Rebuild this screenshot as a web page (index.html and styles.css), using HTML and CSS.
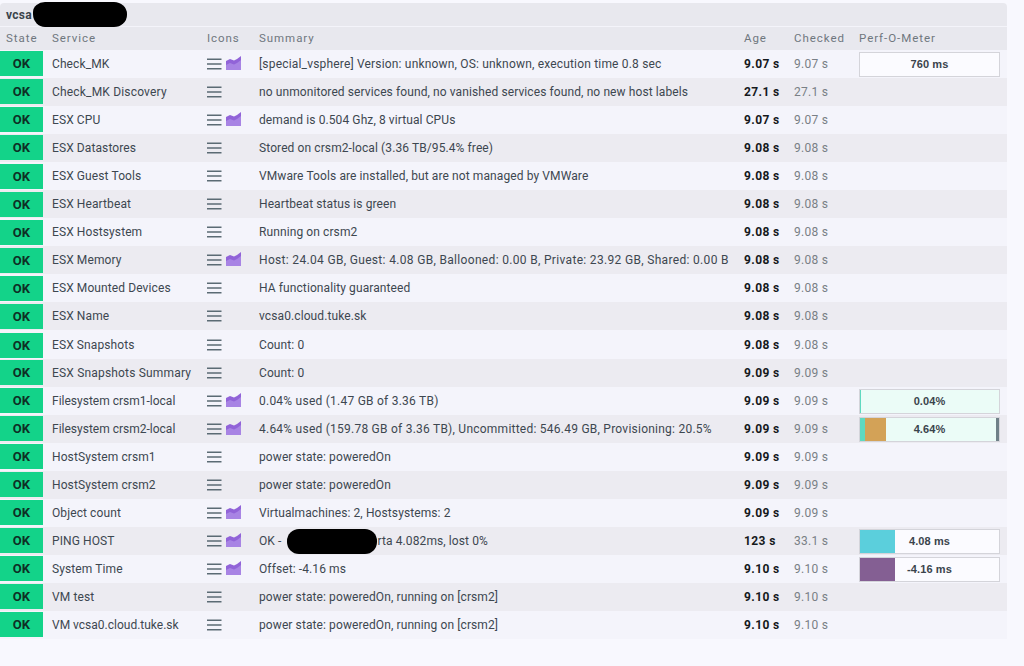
FILE: index.html
```html
<!DOCTYPE html>
<html lang="en">
<head>
<meta charset="utf-8">
<title>vcsa services</title>
<link rel="stylesheet" href="styles.css">
</head>
<body>
<svg class="defs" width="0" height="0" aria-hidden="true">
  <symbol id="menu" viewBox="0 0 15 12"><path d="M0 1.2h14.5M0 6h14.5M0 10.8h14.5" stroke="#5b6b74" stroke-width="1.6" fill="none"/></symbol>
  <symbol id="graph" viewBox="0 0 15 14"><path d="M0 14V5l4-2 4 1.5L11 3l4-3v14z" fill="#9163d8"/><path d="M0 14V9l4-2 4 1.5L11 7l4-3v10z" fill="#a884e4"/></symbol>
</svg>
<main class="view">
  <div class="title">vcsa<span class="blob-title"></span></div>
  <table class="services">
    <colgroup><col class="c-state"><col class="c-service"><col class="c-icons"><col class="c-summary"><col class="c-age"><col class="c-checked"><col class="c-perf"></colgroup>
    <thead><tr><th>State</th><th>Service</th><th>Icons</th><th>Summary</th><th>Age</th><th>Checked</th><th>Perf-O-Meter</th></tr></thead>
    <tbody>
      <tr><td class="state"><div class="badge">OK</div></td><td>Check_MK</td><td class="icons"><svg class="i-menu"><use href="#menu"/></svg><svg class="i-graph"><use href="#graph"/></svg></td><td class="wide">[special_vsphere] Version: unknown, OS: unknown, execution time 0.8 sec</td><td class="age">9.07 s</td><td class="checked">9.07 s</td><td class="perf"><div class="meter"><div class="bar-text">760 ms</div></div></td></tr>
      <tr><td class="state"><div class="badge">OK</div></td><td class="wide">Check_MK Discovery</td><td class="icons"><svg class="i-menu"><use href="#menu"/></svg></td><td>no unmonitored services found, no vanished services found, no new host labels</td><td class="age">27.1 s</td><td class="checked">27.1 s</td><td class="perf"></td></tr>
      <tr><td class="state"><div class="badge">OK</div></td><td>ESX CPU</td><td class="icons"><svg class="i-menu"><use href="#menu"/></svg><svg class="i-graph"><use href="#graph"/></svg></td><td>demand is 0.504 Ghz, 8 virtual CPUs</td><td class="age">9.07 s</td><td class="checked">9.07 s</td><td class="perf"></td></tr>
      <tr><td class="state"><div class="badge">OK</div></td><td>ESX Datastores</td><td class="icons"><svg class="i-menu"><use href="#menu"/></svg></td><td>Stored on crsm2-local (3.36 TB/95.4% free)</td><td class="age">9.08 s</td><td class="checked">9.08 s</td><td class="perf"></td></tr>
      <tr><td class="state"><div class="badge">OK</div></td><td>ESX Guest Tools</td><td class="icons"><svg class="i-menu"><use href="#menu"/></svg></td><td>VMware Tools are installed, but are not managed by VMWare</td><td class="age">9.08 s</td><td class="checked">9.08 s</td><td class="perf"></td></tr>
      <tr><td class="state"><div class="badge">OK</div></td><td>ESX Heartbeat</td><td class="icons"><svg class="i-menu"><use href="#menu"/></svg></td><td>Heartbeat status is green</td><td class="age">9.08 s</td><td class="checked">9.08 s</td><td class="perf"></td></tr>
      <tr><td class="state"><div class="badge">OK</div></td><td>ESX Hostsystem</td><td class="icons"><svg class="i-menu"><use href="#menu"/></svg></td><td>Running on crsm2</td><td class="age">9.08 s</td><td class="checked">9.08 s</td><td class="perf"></td></tr>
      <tr><td class="state"><div class="badge">OK</div></td><td>ESX Memory</td><td class="icons"><svg class="i-menu"><use href="#menu"/></svg><svg class="i-graph"><use href="#graph"/></svg></td><td class="dense">Host: 24.04 GB, Guest: 4.08 GB, Ballooned: 0.00 B, Private: 23.92 GB, Shared: 0.00 B</td><td class="age">9.08 s</td><td class="checked">9.08 s</td><td class="perf"></td></tr>
      <tr><td class="state"><div class="badge">OK</div></td><td>ESX Mounted Devices</td><td class="icons"><svg class="i-menu"><use href="#menu"/></svg></td><td>HA functionality guaranteed</td><td class="age">9.08 s</td><td class="checked">9.08 s</td><td class="perf"></td></tr>
      <tr><td class="state"><div class="badge">OK</div></td><td>ESX Name</td><td class="icons"><svg class="i-menu"><use href="#menu"/></svg></td><td>vcsa0.cloud.tuke.sk</td><td class="age">9.08 s</td><td class="checked">9.08 s</td><td class="perf"></td></tr>
      <tr><td class="state"><div class="badge">OK</div></td><td>ESX Snapshots</td><td class="icons"><svg class="i-menu"><use href="#menu"/></svg></td><td>Count: 0</td><td class="age">9.08 s</td><td class="checked">9.08 s</td><td class="perf"></td></tr>
      <tr><td class="state"><div class="badge">OK</div></td><td class="wide">ESX Snapshots Summary</td><td class="icons"><svg class="i-menu"><use href="#menu"/></svg></td><td>Count: 0</td><td class="age">9.09 s</td><td class="checked">9.09 s</td><td class="perf"></td></tr>
      <tr><td class="state"><div class="badge">OK</div></td><td class="snug">Filesystem crsm1-local</td><td class="icons"><svg class="i-menu"><use href="#menu"/></svg><svg class="i-graph"><use href="#graph"/></svg></td><td class="numeric">0.04% used (1.47 GB of 3.36 TB)</td><td class="age">9.09 s</td><td class="checked">9.09 s</td><td class="perf"><div class="meter meter-fs"><div class="seg seg-teal seg-thin"></div><div class="bar-text">0.04%</div></div></td></tr>
      <tr><td class="state"><div class="badge">OK</div></td><td class="snug">Filesystem crsm2-local</td><td class="icons"><svg class="i-menu"><use href="#menu"/></svg><svg class="i-graph"><use href="#graph"/></svg></td><td class="numeric">4.64% used (159.78 GB of 3.36 TB), Uncommitted: 546.49 GB, Provisioning: 20.5%</td><td class="age">9.09 s</td><td class="checked">9.09 s</td><td class="perf"><div class="meter meter-fs"><div class="seg seg-teal seg-small"></div><div class="seg seg-gold"></div><div class="seg-gap"></div><div class="bar-text">4.64%</div><div class="seg seg-slate"></div></div></td></tr>
      <tr><td class="state"><div class="badge">OK</div></td><td>HostSystem crsm1</td><td class="icons"><svg class="i-menu"><use href="#menu"/></svg></td><td>power state: poweredOn</td><td class="age">9.09 s</td><td class="checked">9.09 s</td><td class="perf"></td></tr>
      <tr><td class="state"><div class="badge">OK</div></td><td>HostSystem crsm2</td><td class="icons"><svg class="i-menu"><use href="#menu"/></svg></td><td>power state: poweredOn</td><td class="age">9.09 s</td><td class="checked">9.09 s</td><td class="perf"></td></tr>
      <tr><td class="state"><div class="badge">OK</div></td><td>Object count</td><td class="icons"><svg class="i-menu"><use href="#menu"/></svg><svg class="i-graph"><use href="#graph"/></svg></td><td>Virtualmachines: 2, Hostsystems: 2</td><td class="age">9.09 s</td><td class="checked">9.09 s</td><td class="perf"></td></tr>
      <tr><td class="state"><div class="badge">OK</div></td><td>PING HOST</td><td class="icons"><svg class="i-menu"><use href="#menu"/></svg><svg class="i-graph"><use href="#graph"/></svg></td><td>OK - <span class="blob-inline"></span>rta 4.082ms, lost 0%</td><td class="age">123 s</td><td class="checked">33.1 s</td><td class="perf"><div class="meter"><div class="seg seg-half seg-cyan"></div><div class="bar-text">4.08 ms</div></div></td></tr>
      <tr><td class="state"><div class="badge">OK</div></td><td>System Time</td><td class="icons"><svg class="i-menu"><use href="#menu"/></svg><svg class="i-graph"><use href="#graph"/></svg></td><td>Offset: -4.16 ms</td><td class="age">9.10 s</td><td class="checked">9.10 s</td><td class="perf"><div class="meter"><div class="seg seg-half seg-purple"></div><div class="bar-text">-4.16 ms</div></div></td></tr>
      <tr><td class="state"><div class="badge">OK</div></td><td>VM test</td><td class="icons"><svg class="i-menu"><use href="#menu"/></svg></td><td>power state: poweredOn, running on [crsm2]</td><td class="age">9.10 s</td><td class="checked">9.10 s</td><td class="perf"></td></tr>
      <tr><td class="state"><div class="badge">OK</div></td><td class="snug">VM vcsa0.cloud.tuke.sk</td><td class="icons"><svg class="i-menu"><use href="#menu"/></svg></td><td>power state: poweredOn, running on [crsm2]</td><td class="age">9.10 s</td><td class="checked">9.10 s</td><td class="perf"></td></tr>
    </tbody>
  </table>
</main>
</body>
</html>
```
FILE: styles.css
```css
* { box-sizing: border-box; }
html, body { margin: 0; padding: 0; }
body {
  background: #f8f8fe;
  color: #3d4750;
  font-family: Roboto, "Liberation Sans", sans-serif;
  font-size: 12px;
  letter-spacing: .1px;
  height: 666px;
  overflow: hidden;
}
.defs { position: absolute; }
.view { width: 1007px; padding-top: 3px; }
.title {
  position: relative;
  height: 24px;
  line-height: 24px;
  padding-left: 6px;
  font-weight: 700;
  font-size: 12px;
  letter-spacing: .3px;
  background: #e8e8ee;
  border-bottom: 1px solid #f4f4fa;
  border-radius: 4px 4px 0 0;
  color: #3a444c;
}
.blob-title {
  position: absolute;
  left: 33px;
  top: -1px;
  width: 94px;
  height: 25px;
  background: #000;
  border-radius: 12px 13px 13px 12px / 10px 12px 12px 13px;
}
.blob-inline {
  display: inline-block;
  vertical-align: middle;
  width: 90px;
  height: 25px;
  margin: -6px 1px -6px 2px;
  background: #000;
  border-radius: 12px;
}
.services { width: 100%; border-collapse: collapse; table-layout: fixed; }
.c-state { width: 43px; }
.c-service { width: 155px; }
.c-icons { width: 52px; }
.c-summary { width: 485px; }
.c-age { width: 50px; }
.c-checked { width: 65px; }
th {
  height: 23px;
  padding: 0 0 2px 9px;
  text-align: left;
  font-weight: 400;
  color: #6f777e;
  letter-spacing: .95px;
  background: #e8e8ee;
  font-size: 11.5px;
}
th:first-child { padding-left: 6px; }
tbody tr { height: 28px; background: #f4f4fb; }
tbody tr:nth-child(even) { background: #ecebf1; }
tbody tr:nth-child(11) { height: 29px; }
td { padding: 0 0 0 9px; white-space: nowrap; }
td.snug { letter-spacing: 0; }
td.wide { letter-spacing: .18px; }
td.numeric { letter-spacing: .24px; }
td.dense { letter-spacing: .325px; }
td.state { padding: 1px 0 2px; }
tbody tr:nth-child(n+5):nth-child(-n+11) td.state { padding: 2px 0 1px; }
.badge {
  height: 25px;
  line-height: 25px;
  background: #13d389;
  color: #0e2f25;
  font-weight: 700;
  font-size: 13px;
  text-align: center;
}
td.icons { font-size: 0; }
.i-menu { width: 15px; height: 12px; vertical-align: middle; }
.i-graph { width: 15px; height: 14px; margin-left: 4px; vertical-align: middle; position: relative; top: -1px; }
.age { font-weight: 700; color: #15191c; letter-spacing: .4px; }
.checked { color: #797f85; letter-spacing: .3px; }
td.perf { padding: 0 0 0 9px; }
.meter {
  position: relative;
  display: flex;
  align-items: stretch;
  width: 141px;
  height: 25px;
  border: 1px solid #d4d4da;
  background: #fbfbff;
}
.meter-fs { background: #ebfcf7; }
.bar-text {
  position: absolute;
  inset: 0;
  text-align: center;
  line-height: 23px;
  font-family: "Liberation Sans", Arial, sans-serif;
  font-weight: 700;
  font-size: 11px;
  color: #3a444c;
}
.seg { flex: none; }
.seg-gap { flex: 1; }
.seg-thin { width: 1px; }
.seg-small { width: 5px; }
.seg-teal { background: #5fd9c0; }
.seg-gold { width: 21px; background: #d3a257; }
.seg-slate { width: 3px; background: #6f8088; }
.seg-half { width: 35px; }
.seg-cyan { background: #5bcfdc; }
.seg-purple { background: #845f93; }
```
